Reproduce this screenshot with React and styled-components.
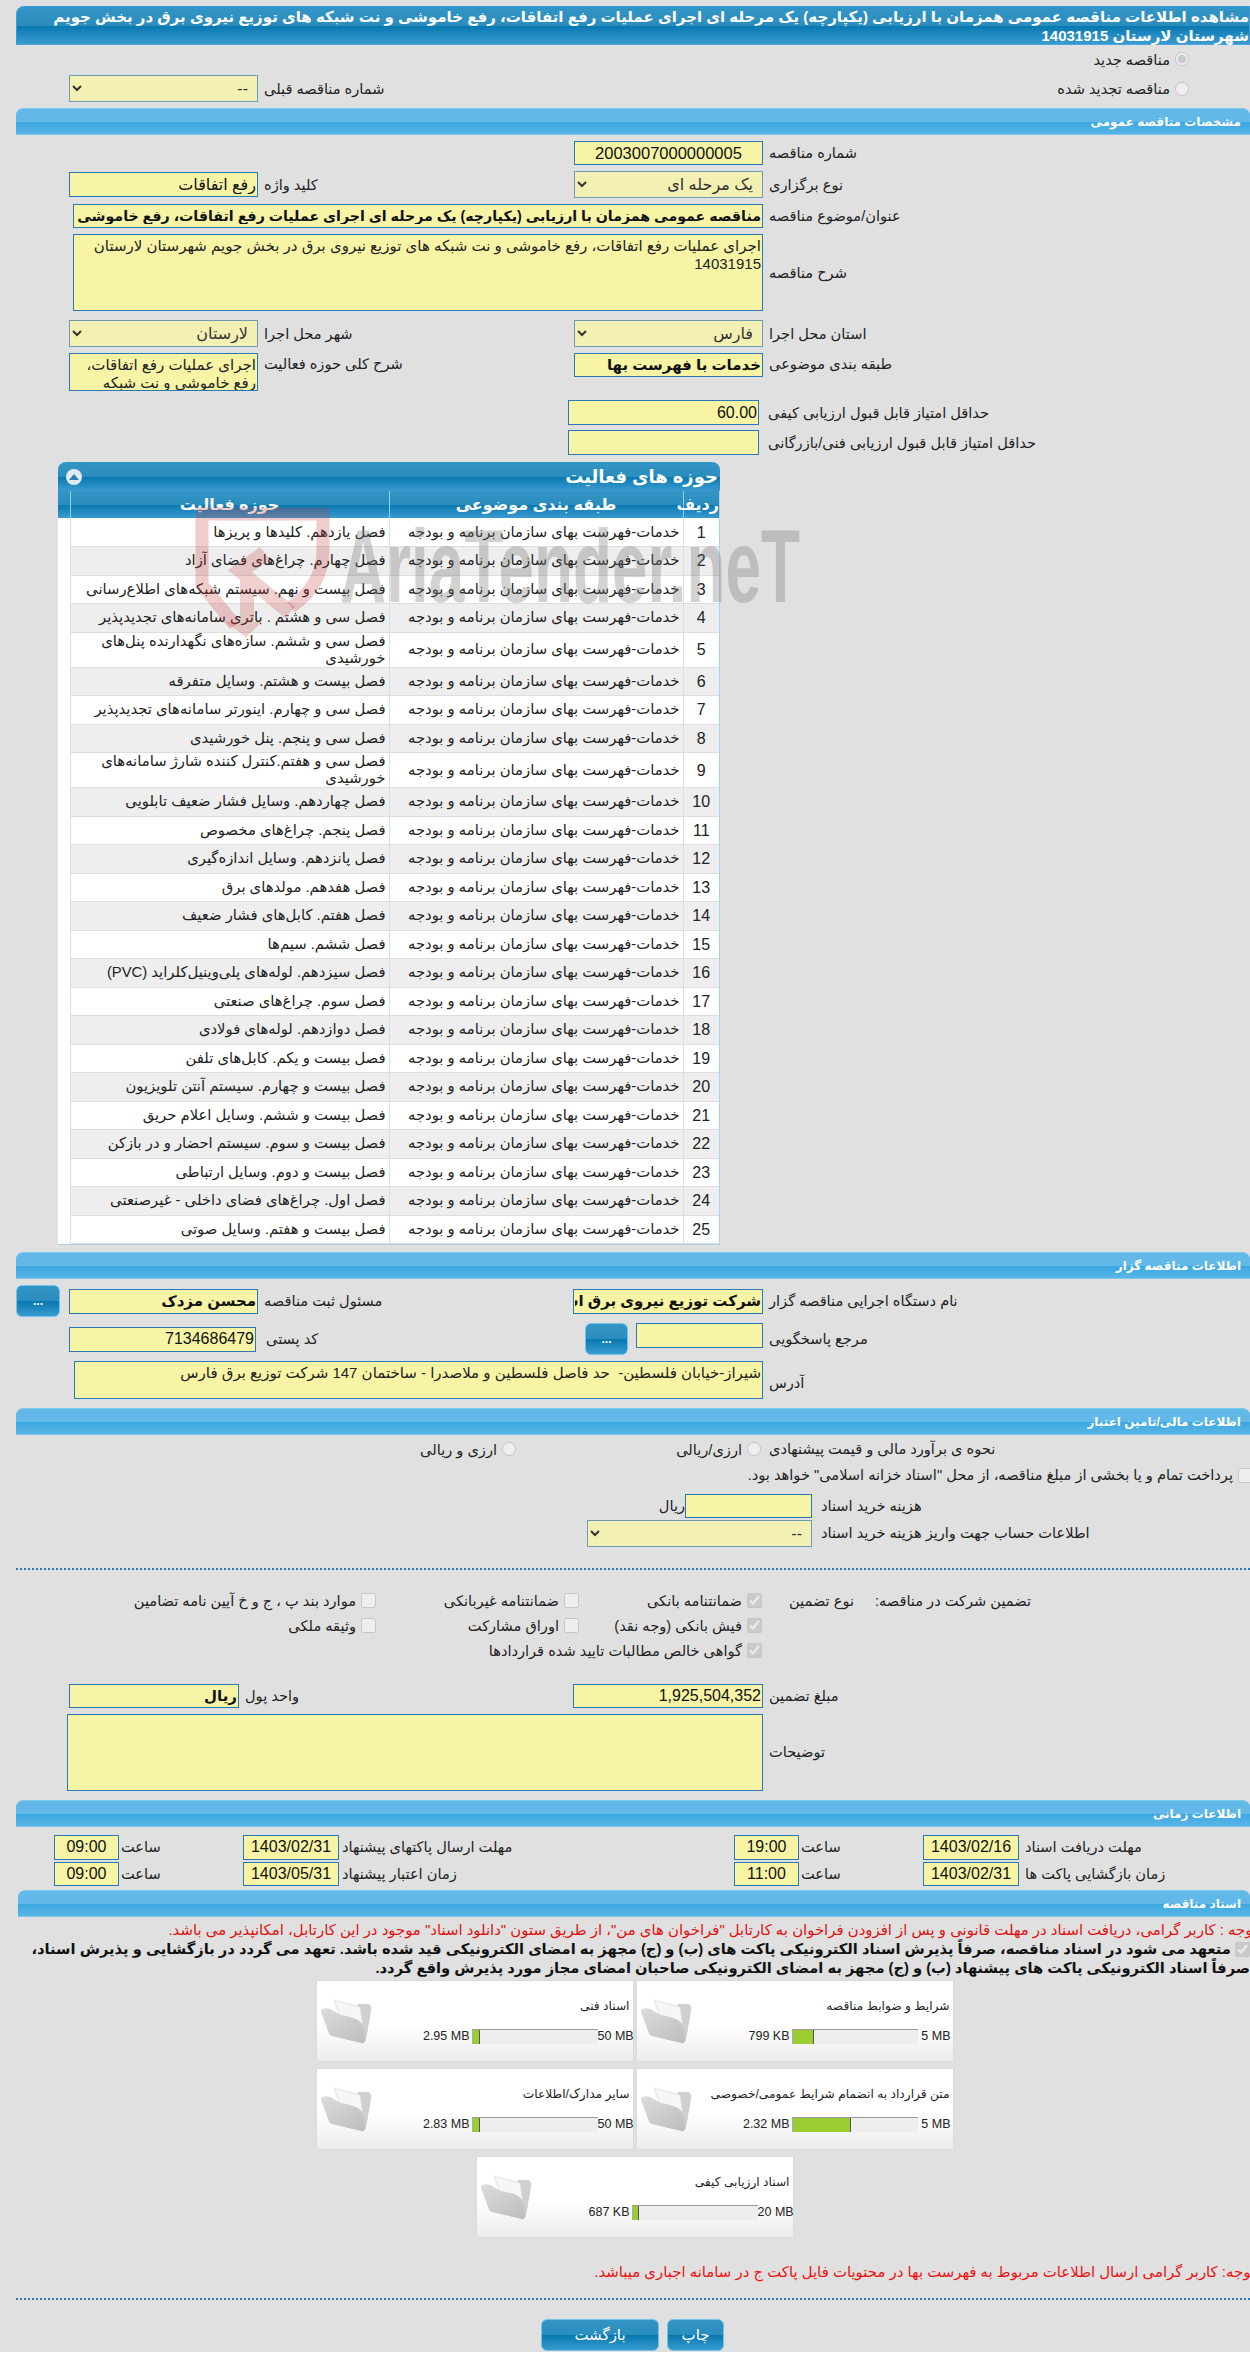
import styled, { createGlobalStyle } from "styled-components";

const GlobalStyle = createGlobalStyle`
  html, body {
    margin: 0;
    padding: 0;
    background: #fff;
  }
  * {
    box-sizing: border-box;
  }
`;

const FONT = `"Liberation Sans", "DejaVu Sans", sans-serif`;
const DARK_BAR = "linear-gradient(#3295c5 0, #2b8dbd 50%, #0778b0 51%, #3a9bd0 100%)";

const Page = styled.div`
  width: 1250px;
  height: 2352px;
  padding-top: 6px;
  overflow: hidden;
  position: relative;
  direction: rtl;
  background: #e0e0e0;
  color: #222;
  font-family: ${FONT};
  font-size: 14.6px;
`;

const PageTitle = styled.h1`
  margin: 0 0 0 16px;
  height: 39px;
  padding: 0;
  border: 1px solid #3a9bd8;
  border-bottom-color: #4aa6dc;
  border-radius: 8px 0 0 0;
  background: ${DARK_BAR};
  color: #fff;
  font-size: 15px;
  font-weight: bold;
  line-height: 19px;
`;

const SectionBar = styled.div`
  margin: ${(p) => p.$mt || 0}px 0 0 ${(p) => p.$left || 16}px;
  height: 27px;
  padding-right: 9px;
  border-radius: 7px 7px 0 0;
  border-top: 1px solid #7cc8ee;
  border-bottom: 1px solid #7cc8ee;
  background: linear-gradient(#62b9e9 0, #62b9e9 50%, #3aa7e0 51%, #5ab5e6 100%);
  color: #fff;
  font-size: 12px;
  font-weight: bold;
  line-height: 26px;
`;

const FieldRow = styled.div`
  display: grid;
  grid-template-columns: ${(p) => p.$cols || "487px 189px 316px 189px"};
  align-items: ${(p) => p.$align || "center"};
  margin-top: ${(p) => p.$mt || 0}px;
`;

const Label = styled.label`
  display: block;
  padding-left: ${(p) => p.$pad ?? 6}px;
  padding-top: ${(p) => p.$pt || 0}px;
  text-align: ${(p) => p.$text || "left"};
  white-space: nowrap;
  line-height: 18px;
`;

const Field = styled.input`
  display: block;
  width: 100%;
  height: ${(p) => p.$h || 25}px;
  margin: 0;
  padding: 0 1px;
  border: 1px solid #2a78b4;
  border-radius: 0;
  outline: none;
  background: #f7f5a5;
  color: #111;
  font-family: ${FONT};
  font-size: ${(p) => p.$size || 16}px;
  font-weight: ${(p) => (p.$bold ? "bold" : "normal")};
  text-align: ${(p) => p.$text || "right"};
  grid-column: ${(p) => p.$span || "auto"};
  align-self: ${(p) => p.$self || "auto"};
`;

const Area = styled.textarea`
  display: block;
  width: 100%;
  height: ${(p) => p.$h}px;
  margin: 0;
  padding: 2px 1px;
  border: 1px solid #2a78b4;
  border-radius: 0;
  outline: none;
  resize: none;
  overflow: hidden;
  background: #f7f5a5;
  color: #222;
  font-family: ${FONT};
  font-size: 15px;
  line-height: 18px;
  grid-column: ${(p) => p.$span || "auto"};
`;

const Select = styled.select`
  display: block;
  width: 100%;
  height: 27px;
  margin: 0;
  padding: 0 5px;
  border: 1px solid #6d9cb5;
  border-radius: 0;
  background-color: #f3f0b4;
  opacity: 1;
  color: #333;
  font-family: ${FONT};
  font-size: 16px;
`;

const RadioRow = styled.div`
  display: flex;
  align-items: center;
  height: ${(p) => p.$h || 28}px;
  padding-right: 61px;
  gap: 5px;
`;

const Radio = styled.input.attrs({ type: "radio", disabled: true })`
  width: 14px;
  height: 14px;
  margin: 0;
  flex: none;
`;

const Check = styled.input.attrs({ type: "checkbox", disabled: true })`
  width: 15px;
  height: 15px;
  margin: 0;
  flex: none;
  vertical-align: middle;
`;

const OptionItem = styled.span`
  display: inline-flex;
  align-items: center;
  gap: 5px;
  padding-right: ${(p) => p.$pr || 0}px;
  white-space: nowrap;
`;

const SquareButton = styled.button`
  display: block;
  width: ${(p) => p.$w || 44}px;
  height: 32px;
  padding: 0;
  border: 1px solid #6ec4ea;
  border-radius: 6px;
  background: ${DARK_BAR};
  color: #fff;
  font-family: ${FONT};
  font-size: ${(p) => p.$size || 12}px;
  font-weight: ${(p) => (p.$bold ? "bold" : "normal")};
`;

const ScoreRows = styled.div`
  margin-top: 9px;
  display: grid;
  grid-template-columns: 491px 191px;
  grid-auto-rows: 25px;
  row-gap: 5px;
  align-items: center;
`;

const Panel = styled.div`
  width: 662px;
  height: 783px;
  margin: 7px 530px 0 0;
  border: 1px solid #a9d2ec;
  border-top: none;
  border-radius: 8px 8px 0 0;
  background: #fff;
`;

const PanelHead = styled.div`
  display: flex;
  justify-content: space-between;
  align-items: center;
  height: 29px;
  padding: 0 2px 0 8px;
  margin: 0 -1px;
  border-radius: 8px 8px 0 0;
  background: ${DARK_BAR};
  color: #fff;
  font-size: 18px;
  font-weight: bold;
`;

const Collapse = styled.span`
  width: 16px;
  height: 16px;
  border-radius: 50%;
  background: #dfeaf3;
  display: flex;
  align-items: center;
  justify-content: center;
`;

const Table = styled.table`
  width: 100%;
  table-layout: fixed;
  border-collapse: collapse;
`;

const HeadCell = styled.th`
  height: 27px;
  padding: 0;
  border-left: 1px solid #8ed0f0;
  background: ${DARK_BAR};
  color: #fff;
  font-size: 16px;
  font-weight: bold;
  text-align: center;
  white-space: nowrap;
  &:last-child {
    border-left: none;
  }
`;

const DataRow = styled.tr`
  background: ${(p) => (p.$odd ? "#fff" : "#eeeeee")};
`;

const DataCell = styled.td`
  height: ${(p) => (p.$tall ? 34.7 : 28.5)}px;
  padding: 0 3px;
  border-left: 1px solid #ddd;
  border-bottom: 1px solid #ddd;
  font-size: ${(p) => p.$size || 14.8}px;
  line-height: 17px;
  text-align: ${(p) => (p.$center ? "center" : "right")};
`;

const BlankCell = styled.td`
  background: #fff;
`;

const Watermark = styled.svg`
  position: absolute;
  left: 190px;
  top: 500px;
  pointer-events: none;
`;

const TextLine = styled.div`
  margin: ${(p) => p.$mt || 0}px ${(p) => p.$mr || 0}px 0 0;
  color: ${(p) => p.$color || "inherit"};
  font-weight: ${(p) => (p.$bold ? "bold" : "normal")};
  font-size: ${(p) => p.$size || 14.6}px;
  line-height: ${(p) => p.$lh || 19}px;
  white-space: nowrap;
`;

const Dotted = styled.div`
  margin: ${(p) => p.$mt}px 0 0 16px;
  border-top: 2px dotted #2a78b4;
`;

const GuaranteeGrid = styled.div`
  display: grid;
  grid-template-columns: 377px 111px 183px 203px 1fr;
  grid-auto-rows: 25px;
  align-items: center;
  margin-top: 18px;
`;

const GuaranteeTitle = styled.span`
  padding-right: ${(p) => p.$pr}px;
  white-space: nowrap;
`;

const Cards = styled.div`
  display: flex;
  flex-wrap: wrap;
  justify-content: center;
  gap: 8px 4px;
  width: 637px;
  margin: 3px 297px 0 0;
`;

const Card = styled.div`
  display: flex;
  width: 316px;
  height: 80px;
  padding: 18px 0 0 3px;
  background: linear-gradient(#fff 0, #fff 55%, #ececec 100%);
  box-shadow: 0 0 2px #cfcfcf;
`;

const CardInfo = styled.div`
  flex: 1;
  min-width: 0;
`;

const CardTitle = styled.div`
  height: 14px;
  padding-right: 3px;
  margin-bottom: 16px;
  font-size: 12.2px;
  line-height: 14px;
  white-space: nowrap;
`;

const Meter = styled.div`
  display: grid;
  grid-template-columns: 35px 126px auto;
  align-items: center;
  height: 15px;
`;

const MeterText = styled.span`
  direction: ltr;
  text-align: right;
  padding-right: 2px;
  font-size: 12.5px;
  white-space: nowrap;
`;

const MeterTrack = styled.div`
  height: 15px;
  direction: ltr;
  background: #eeeeee;
  border-top: 1px solid #999;
  border-left: 1px solid #aaa;
`;

const MeterFill = styled.div`
  height: 100%;
  background: #9acd32;
  border-right: 1px solid #555;
`;

const Actions = styled.div`
  display: flex;
  justify-content: center;
  gap: 8px;
  margin: 19px 0 0 15px;
`;

const category = "خدمات-فهرست بهای سازمان برنامه و بودجه";

const activities = [
  "فصل یازدهم. کلیدها و پریزها",
  "فصل چهارم. چراغ‌های فضای آزاد",
  "فصل بیست و نهم. سیستم شبکه‌های اطلاع‌رسانی",
  "فصل سی و هشتم . باتری سامانه‌های تجدیدپذیر",
  "فصل سی و ششم. سازه‌های نگهدارنده پنل‌های خورشیدی",
  "فصل بیست و هشتم. وسایل متفرقه",
  "فصل سی و چهارم. اینورتر سامانه‌های تجدیدپذیر",
  "فصل سی و پنجم. پنل خورشیدی",
  "فصل سی و هفتم.کنترل کننده شارژ سامانه‌های خورشیدی",
  "فصل چهاردهم. وسایل فشار ضعیف تابلویی",
  "فصل پنجم. چراغ‌های مخصوص",
  "فصل پانزدهم. وسایل اندازه‌گیری",
  "فصل هفدهم. مولدهای برق",
  "فصل هفتم. کابل‌های فشار ضعیف",
  "فصل ششم. سیم‌ها",
  "فصل سیزدهم. لوله‌های پلی‌وینیل‌کلراید (PVC)",
  "فصل سوم. چراغ‌های صنعتی",
  "فصل دوازدهم. لوله‌های فولادی",
  "فصل بیست و یکم. کابل‌های تلفن",
  "فصل بیست و چهارم. سیستم آنتن تلویزیون",
  "فصل بیست و ششم. وسایل اعلام حریق",
  "فصل بیست و سوم. سیستم احضار و در بازکن",
  "فصل بیست و دوم. وسایل ارتباطی",
  "فصل اول. چراغ‌های فضای داخلی - غیرصنعتی",
  "فصل بیست و هفتم. وسایل صوتی",
];

const documents = [
  { title: "شرایط و ضوابط مناقصه", size: "799 KB", max: "5 MB", pct: 17 },
  { title: "اسناد فنی", size: "2.95 MB", max: "50 MB", pct: 6 },
  { title: "متن قرارداد به انضمام شرایط عمومی/خصوصی", size: "2.32 MB", max: "5 MB", pct: 47 },
  { title: "سایر مدارک/اطلاعات", size: "2.83 MB", max: "50 MB", pct: 6 },
  { title: "اسناد ارزیابی کیفی", size: "687 KB", max: "20 MB", pct: 5 },
];

const tenderTitle =
  "مناقصه عمومی همزمان با ارزیابی (یکپارچه) یک مرحله ای اجرای عملیات رفع اتفاقات، رفع خاموشی و نت شبکه های توزیع نیروی برق در بخش جویم شهرستان لارستان 14031915";

const FolderIcon = () => (
  <svg width="53" height="46" viewBox="0 0 53 46" style={{ flex: "none" }}>
    <defs>
      <linearGradient id="folderFront" x1="0" y1="0" x2="1" y2="1">
        <stop offset="0" stopColor="#dcdcdc" />
        <stop offset="1" stopColor="#bdbdbd" />
      </linearGradient>
    </defs>
    <path d="M38 5 L48 5 Q52 6 51 12 L46 41 Q45 44 43 43 L30 30 Z" fill="#cfcfcf" />
    <path d="M14 1 L40 8 L43 28 L20 18 Z" fill="#f6f6f6" stroke="#e4e4e4" />
    <path
      d="M2 10 Q8 8 12 11 L20 16 Q30 17 38 21 Q43 24 44 30 L45 42 Q44 45 41 44 L12 37 Q9 36 8 32 L1 13 Q1 11 2 10 Z"
      fill="url(#folderFront)"
    />
  </svg>
);

const App = () => {
  return (
    <>
      <GlobalStyle />
      <Page>
        <PageTitle>
          مشاهده اطلاعات مناقصه عمومی همزمان با ارزیابی (یکپارچه) یک مرحله ای اجرای عملیات رفع
          اتفاقات، رفع خاموشی و نت شبکه های توزیع نیروی برق در بخش جویم شهرستان لارستان 14031915
        </PageTitle>

        <RadioRow>
          <Radio defaultChecked name="kind" />
          <span>مناقصه جدید</span>
        </RadioRow>
        <FieldRow $mt={2}>
          <RadioRow $h={27}>
            <Radio name="kind" />
            <span>مناقصه تجدید شده</span>
          </RadioRow>
          <span />
          <Label>شماره مناقصه قبلی</Label>
          <Select disabled>
            <option>--</option>
          </Select>
        </FieldRow>

        <SectionBar $mt={6}>مشخصات مناقصه عمومی</SectionBar>

        <FieldRow $mt={6}>
          <Label>شماره مناقصه</Label>
          <Field readOnly $h={24} $size={16.5} $text="center" value="2003007000000005" />
        </FieldRow>
        <FieldRow $mt={6}>
          <Label>نوع برگزاری</Label>
          <Select disabled>
            <option>یک مرحله ای</option>
          </Select>
          <Label>کلید واژه</Label>
          <Field readOnly value="رفع اتفاقات" />
        </FieldRow>
        <FieldRow $mt={6} $cols="487px 690px">
          <Label>عنوان/موضوع مناقصه</Label>
          <Field readOnly $h={24} $bold $size={14.2} value={tenderTitle} />
        </FieldRow>
        <FieldRow $mt={6} $cols="487px 690px">
          <Label>شرح مناقصه</Label>
          <Area
            readOnly
            $h={77}
            value="اجرای عملیات رفع اتفاقات، رفع خاموشی و نت شبکه های توزیع نیروی برق در بخش جویم شهرستان لارستان 14031915"
          />
        </FieldRow>
        <FieldRow $mt={9}>
          <Label>استان محل اجرا</Label>
          <Select disabled>
            <option>فارس</option>
          </Select>
          <Label>شهر محل اجرا</Label>
          <Select disabled>
            <option>لارستان</option>
          </Select>
        </FieldRow>
        <FieldRow $mt={6} $align="start">
          <Label $pt={2}>طبقه بندی موضوعی</Label>
          <Field readOnly $h={24} $bold $size={15} value="خدمات با فهرست بها" />
          <Label $pt={2}>شرح کلی حوزه فعالیت</Label>
          <Area
            readOnly
            $h={38}
            value="اجرای عملیات رفع اتفاقات، رفع خاموشی و نت شبکه"
          />
        </FieldRow>

        <ScoreRows>
          <Label $pad={9}>حداقل امتیاز قابل قبول ارزیابی کیفی</Label>
          <Field readOnly $size={16} value="60.00" />
          <Label $pad={9}>حداقل امتیاز قابل قبول ارزیابی فنی/بازرگانی</Label>
          <Field readOnly value="" />
        </ScoreRows>

        <Panel>
          <PanelHead>
            <span>حوزه های فعالیت</span>
            <Collapse>
              <svg width="10" height="6" viewBox="0 0 10 6">
                <path d="M5 0 L10 6 L0 6 Z" fill="#2b7fb5" />
              </svg>
            </Collapse>
          </PanelHead>
          <Table>
            <colgroup>
              <col style={{ width: 36 }} />
              <col style={{ width: 294 }} />
              <col style={{ width: 319 }} />
              <col style={{ width: 12 }} />
            </colgroup>
            <thead>
              <tr>
                <HeadCell>ردیف</HeadCell>
                <HeadCell>طبقه بندی موضوعی</HeadCell>
                <HeadCell>حوزه فعالیت</HeadCell>
                <HeadCell />
              </tr>
            </thead>
            <tbody>
              {activities.map((activity, i) => {
                const tall = i === 4 || i === 8;
                return (
                  <DataRow key={activity} $odd={i % 2 === 0}>
                    <DataCell $tall={tall} $center $size={16}>
                      {i + 1}
                    </DataCell>
                    <DataCell $tall={tall}>{category}</DataCell>
                    <DataCell $tall={tall}>{activity}</DataCell>
                    <BlankCell />
                  </DataRow>
                );
              })}
            </tbody>
          </Table>
        </Panel>

        <Watermark width="620" height="150" viewBox="0 0 620 150">
          <path
            d="M101 107 Q133 85 133 50 L133 14 L12 14 L12 85 L45 125"
            fill="none"
            stroke="#c43a3a"
            strokeOpacity="0.26"
            strokeWidth="13"
          />
          <path
            d="M38 70 L70 47 L80 60 L62 72 L105 107 L95 118 L64 92 L64 122 L72 122 L56 137 L35 122 L50 122 L50 80 Z"
            fill="#c43a3a"
            fillOpacity="0.24"
          />
          <text
            x="150"
            y="102"
            fontFamily="Liberation Sans"
            fontWeight="bold"
            fontSize="103"
            fill="#777"
            fillOpacity="0.33"
            textLength="460"
            lengthAdjust="spacingAndGlyphs"
            style={{ direction: "ltr", unicodeBidi: "bidi-override" }}
          >
            AriaTender.neT
          </text>
        </Watermark>

        <SectionBar $mt={7}>اطلاعات مناقصه گزار</SectionBar>

        <FieldRow $mt={6} $cols="487px 190px 315px 189px 9px 44px">
          <Label>نام دستگاه اجرایی مناقصه گزار</Label>
          <Field readOnly $bold $size={15} value="شرکت توزیع نیروی برق استان فارس" />
          <Label>مسئول ثبت مناقصه</Label>
          <Field readOnly $bold $size={15} value="محسن مزدک" />
          <span />
          <SquareButton $bold>...</SquareButton>
        </FieldRow>
        <FieldRow $mt={6} $cols="487px 127px 8px 43px 329px 187px">
          <Label>مرجع پاسخگویی</Label>
          <Field readOnly $self="start" value="" />
          <span />
          <SquareButton $w={43} $bold>
            ...
          </SquareButton>
          <Label $pad={10}>کد پستی</Label>
          <Field readOnly value="7134686479" />
        </FieldRow>
        <FieldRow $mt={6} $cols="487px 689px">
          <Label $pt={6}>آدرس</Label>
          <Area readOnly $h={38} value="شیراز-خیابان فلسطین-  حد فاصل فلسطین و ملاصدرا - ساختمان 147 شرکت توزیع برق فارس" />
        </FieldRow>

        <SectionBar $mt={9}>اطلاعات مالی/تامین اعتبار</SectionBar>

        <FieldRow $mt={5} $cols="487px 247px auto">
          <Label>نحوه ی برآورد مالی و قیمت پیشنهادی</Label>
          <OptionItem $pr={2}>
            <Radio name="estimate" />
            <span>ارزی/ریالی</span>
          </OptionItem>
          <OptionItem>
            <Radio name="estimate" />
            <span>ارزی و ریالی</span>
          </OptionItem>
        </FieldRow>
        <TextLine $mt={5} $mr={-3} $lh={24}>
          <OptionItem>
            <Check />
            پرداخت تمام و یا بخشی از مبلغ مناقصه، از محل "اسناد خزانه اسلامی" خواهد بود.
          </OptionItem>
        </TextLine>
        <FieldRow $mt={4} $cols="438px 127px auto">
          <Label $pad={9}>هزینه خرید اسناد</Label>
          <Field readOnly $h={24} value="" />
          <Label $pad={1} $text="right">
            ریال
          </Label>
        </FieldRow>
        <FieldRow $mt={2} $cols="438px 225px">
          <Label $pad={9}>اطلاعات حساب جهت واریز هزینه خرید اسناد</Label>
          <Select disabled>
            <option>--</option>
          </Select>
        </FieldRow>

        <Dotted $mt={21} />

        <GuaranteeGrid>
          <GuaranteeTitle $pr={219}>تضمین شرکت در مناقصه:</GuaranteeTitle>
          <GuaranteeTitle $pr={19}>نوع تضمین</GuaranteeTitle>
          <OptionItem>
            <Check defaultChecked />
            ضمانتنامه بانکی
          </OptionItem>
          <OptionItem>
            <Check />
            ضمانتنامه غیربانکی
          </OptionItem>
          <OptionItem>
            <Check />
            موارد بند پ ، ج و خ آیین نامه تضامین
          </OptionItem>

          <span />
          <span />
          <OptionItem>
            <Check defaultChecked />
            فیش بانکی (وجه نقد)
          </OptionItem>
          <OptionItem>
            <Check />
            اوراق مشارکت
          </OptionItem>
          <OptionItem>
            <Check />
            وثیقه ملکی
          </OptionItem>

          <span />
          <span />
          <OptionItem>
            <Check defaultChecked />
            گواهی خالص مطالبات تایید شده قراردادها
          </OptionItem>
        </GuaranteeGrid>

        <FieldRow $mt={21} $cols="487px 190px 334px 170px">
          <Label>مبلغ تضمین</Label>
          <Field readOnly $h={24} value="1,925,504,352" />
          <Label>واحد پول</Label>
          <Field readOnly $h={24} $bold $size={15} value="ریال" />
        </FieldRow>
        <FieldRow $mt={6} $cols="487px 696px">
          <Label>توضیحات</Label>
          <Area readOnly $h={77} value="" />
        </FieldRow>

        <SectionBar $mt={9}>اطلاعات زمانی</SectionBar>

        <FieldRow $mt={8} $cols="231px 96px 124px 65px 395px 96px 124px 65px">
          <Label>مهلت دریافت اسناد</Label>
          <Field readOnly $text="center" value="1403/02/16" />
          <Label $pad={2}>ساعت</Label>
          <Field readOnly $text="center" value="19:00" />
          <Label $pad={3}>مهلت ارسال پاکتهای پیشنهاد</Label>
          <Field readOnly $text="center" value="1403/02/31" />
          <Label $pad={2}>ساعت</Label>
          <Field readOnly $text="center" value="09:00" />
        </FieldRow>
        <FieldRow $mt={2} $cols="231px 96px 124px 65px 395px 96px 124px 65px">
          <Label>زمان بازگشایی پاکت ها</Label>
          <Field readOnly $h={24} $text="center" value="1403/02/31" />
          <Label $pad={2}>ساعت</Label>
          <Field readOnly $h={24} $text="center" value="11:00" />
          <Label $pad={3}>زمان اعتبار پیشنهاد</Label>
          <Field readOnly $h={24} $text="center" value="1403/05/31" />
          <Label $pad={2}>ساعت</Label>
          <Field readOnly $h={24} $text="center" value="09:00" />
        </FieldRow>

        <SectionBar $mt={4} $left={18}>
          اسناد مناقصه
        </SectionBar>

        <TextLine $mt={4} $mr={-7} $color="#e01010" $size={14.9}>
          توجه : کاربر گرامی، دریافت اسناد در مهلت قانونی و پس از افزودن فراخوان به کارتابل "فراخوان های من"، از طریق ستون "دانلود اسناد" موجود در این کارتابل، امکانپذیر می باشد.
        </TextLine>
        <TextLine $bold $color="#111" $size={14.7}>
          <Check defaultChecked /> متعهد می شود در اسناد مناقصه، صرفاً پذیرش اسناد الکترونیکی پاکت های (ب) و (ج) مجهز به امضای الکترونیکی قید شده باشد. تعهد می گردد در بازگشایی و پذیرش اسناد،
          <br />
          صرفاً اسناد الکترونیکی پاکت های پیشنهاد (ب) و (ج) مجهز به امضای الکترونیکی صاحبان امضای مجاز مورد پذیرش واقع گردد.
        </TextLine>

        <Cards>
          {documents.map((doc) => (
            <Card key={doc.title}>
              <CardInfo>
                <CardTitle>{doc.title}</CardTitle>
                <Meter>
                  <MeterText>{doc.max}</MeterText>
                  <MeterTrack>
                    <MeterFill style={{ width: `${doc.pct}%` }} />
                  </MeterTrack>
                  <MeterText>{doc.size}</MeterText>
                </Meter>
              </CardInfo>
              <FolderIcon />
            </Card>
          ))}
        </Cards>

        <TextLine $mt={26} $mr={-5} $color="#ee1111" $size={14.9}>
          توجه: کاربر گرامی ارسال اطلاعات مربوط به فهرست بها در محتویات فایل پاکت ج در سامانه اجباری میباشد.
        </TextLine>

        <Dotted $mt={16} />

        <Actions>
          <SquareButton $w={57} $size={15}>
            چاپ
          </SquareButton>
          <SquareButton $w={118} $size={15}>
            بازگشت
          </SquareButton>
        </Actions>
      </Page>
    </>
  );
};

export default App;
